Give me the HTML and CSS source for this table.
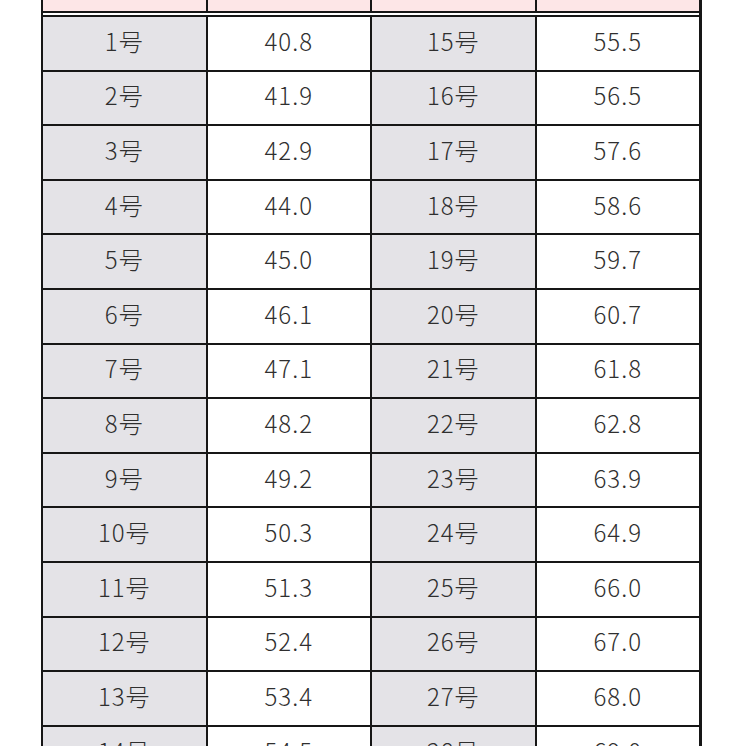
FILE: index.html
```html
<!DOCTYPE html>
<html lang="ja">
<head>
<meta charset="utf-8">
<link rel="stylesheet" href="styles.css">
<title>サイズ表</title>
</head>
<body>
<div class="sheet">
  <div class="cell head"></div><div class="cell head"></div><div class="cell head"></div><div class="cell head"></div>
  <div class="divider"></div>
  <div class="cell key">1号</div><div class="cell val">40.8</div><div class="cell key">15号</div><div class="cell val">55.5</div>
  <div class="cell key">2号</div><div class="cell val">41.9</div><div class="cell key">16号</div><div class="cell val">56.5</div>
  <div class="cell key">3号</div><div class="cell val">42.9</div><div class="cell key">17号</div><div class="cell val">57.6</div>
  <div class="cell key">4号</div><div class="cell val">44.0</div><div class="cell key">18号</div><div class="cell val">58.6</div>
  <div class="cell key">5号</div><div class="cell val">45.0</div><div class="cell key">19号</div><div class="cell val">59.7</div>
  <div class="cell key">6号</div><div class="cell val">46.1</div><div class="cell key">20号</div><div class="cell val">60.7</div>
  <div class="cell key">7号</div><div class="cell val">47.1</div><div class="cell key">21号</div><div class="cell val">61.8</div>
  <div class="cell key">8号</div><div class="cell val">48.2</div><div class="cell key">22号</div><div class="cell val">62.8</div>
  <div class="cell key">9号</div><div class="cell val">49.2</div><div class="cell key">23号</div><div class="cell val">63.9</div>
  <div class="cell key">10号</div><div class="cell val">50.3</div><div class="cell key">24号</div><div class="cell val">64.9</div>
  <div class="cell key">11号</div><div class="cell val">51.3</div><div class="cell key">25号</div><div class="cell val">66.0</div>
  <div class="cell key">12号</div><div class="cell val">52.4</div><div class="cell key">26号</div><div class="cell val">67.0</div>
  <div class="cell key">13号</div><div class="cell val">53.4</div><div class="cell key">27号</div><div class="cell val">68.0</div>
  <div class="cell key">14号</div><div class="cell val">54.5</div><div class="cell key">28号</div><div class="cell val">69.0</div>
</div>
</body>
</html>
```

FILE: styles.css
```css
html, body {
  margin: 0;
  padding: 0;
  background: #ffffff;
  overflow: hidden;
  height: 746px;
}

.sheet {
  margin: -19px 0 0 41px;
  width: 661px;
  box-sizing: border-box;
  padding: 0 3px 0 2px;
  background: #161616;
  display: grid;
  grid-template-columns: repeat(4, 1fr);
  grid-template-rows: 30px 2px;
  grid-auto-rows: 52.6px;
  gap: 2px;
  font-family: "Noto Sans CJK JP", "Noto Sans", sans-serif;
  font-weight: 300;
  font-size: 24px;
  letter-spacing: 1px;
  color: #2f2f2f;
}

.cell {
  display: flex;
  align-items: center;
  justify-content: center;
  line-height: 1;
  padding-bottom: 5px;
  box-sizing: border-box;
}

.head {
  background: #fde6e7;
}

.divider {
  grid-column: 1 / -1;
  background: #ffffff;
  padding: 0;
}

.key {
  background: #e4e3e7;
}

.val {
  background: #ffffff;
}
```
